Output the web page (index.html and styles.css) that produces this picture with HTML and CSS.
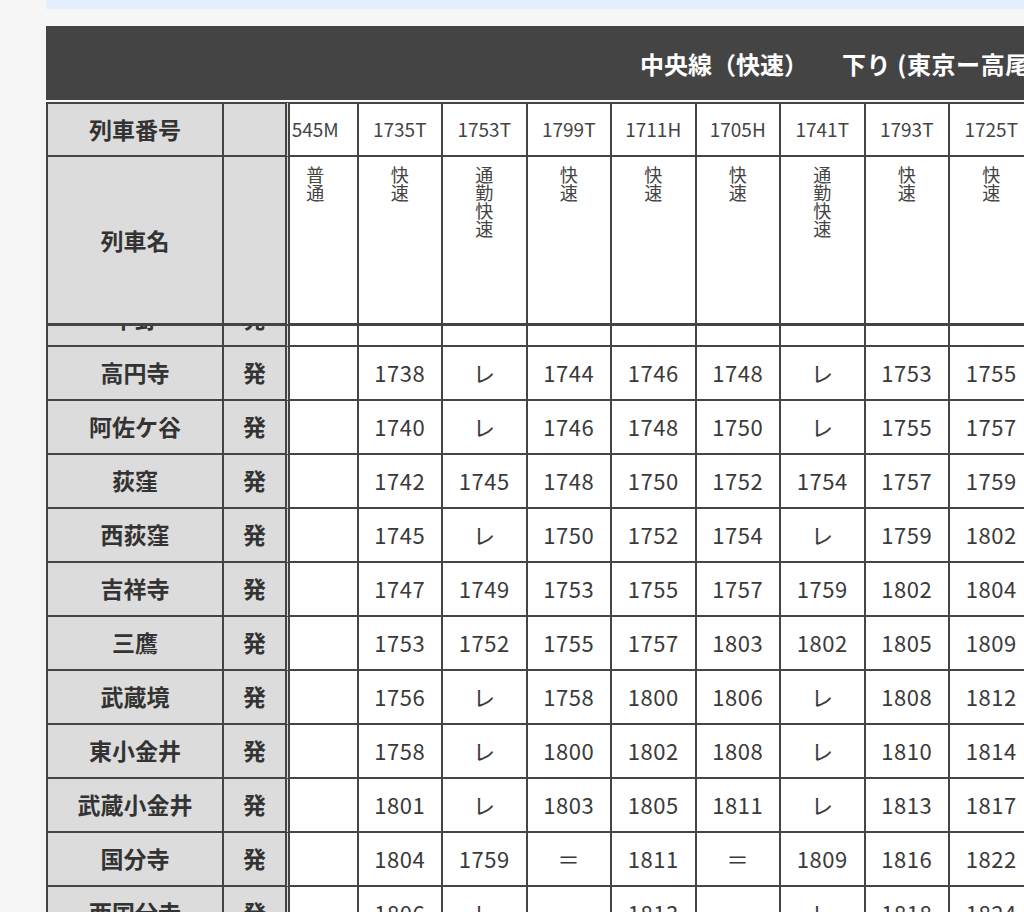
FILE: index.html
```html
<!DOCTYPE html>
<html lang="ja">
<head>
<meta charset="utf-8">
<title>中央線（快速） 下り 時刻表</title>
<link rel="stylesheet" href="styles.css">
</head>
<body>
<div class="page">
  <div class="notice"></div>
  <h1 class="title">中央線（快速）　<span class="dir">下り (東京ー高尾)</span></h1>
  <div class="scroller">
    <table class="tt">
      <thead>
        <tr class="r-no">
          <th class="st corner">列車番号</th>
          <th class="dep corner"></th>
          <th class="tn">545M</th>
          <th class="tn">1735T</th>
          <th class="tn">1753T</th>
          <th class="tn">1799T</th>
          <th class="tn">1711H</th>
          <th class="tn">1705H</th>
          <th class="tn">1741T</th>
          <th class="tn">1793T</th>
          <th class="tn">1725T</th>
          <th class="tn">1727T</th>
          <th class="tn">1801T</th>
        </tr>
        <tr class="r-name">
          <th class="st corner">列車名</th>
          <th class="dep corner"></th>
          <th class="kind"><span class="vt">普通</span></th>
          <th class="kind"><span class="vt">快速</span></th>
          <th class="kind"><span class="vt">通勤快速</span></th>
          <th class="kind"><span class="vt">快速</span></th>
          <th class="kind"><span class="vt">快速</span></th>
          <th class="kind"><span class="vt">快速</span></th>
          <th class="kind"><span class="vt">通勤快速</span></th>
          <th class="kind"><span class="vt">快速</span></th>
          <th class="kind"><span class="vt">快速</span></th>
          <th class="kind"><span class="vt">快速</span></th>
          <th class="kind"><span class="vt">快速</span></th>
        </tr>
      </thead>
      <tbody>
        <tr><th class="st">中野</th><th class="dep">発</th><td></td><td></td><td></td><td></td><td></td><td></td><td></td><td></td><td></td><td></td><td></td></tr>
        <tr><th class="st">高円寺</th><th class="dep">発</th><td></td><td>1738</td><td>レ</td><td>1744</td><td>1746</td><td>1748</td><td>レ</td><td>1753</td><td>1755</td><td>1757</td><td>1759</td></tr>
        <tr><th class="st">阿佐ケ谷</th><th class="dep">発</th><td></td><td>1740</td><td>レ</td><td>1746</td><td>1748</td><td>1750</td><td>レ</td><td>1755</td><td>1757</td><td>1759</td><td>1801</td></tr>
        <tr><th class="st">荻窪</th><th class="dep">発</th><td></td><td>1742</td><td>1745</td><td>1748</td><td>1750</td><td>1752</td><td>1754</td><td>1757</td><td>1759</td><td>1801</td><td>1803</td></tr>
        <tr><th class="st">西荻窪</th><th class="dep">発</th><td></td><td>1745</td><td>レ</td><td>1750</td><td>1752</td><td>1754</td><td>レ</td><td>1759</td><td>1802</td><td>1804</td><td>1806</td></tr>
        <tr><th class="st">吉祥寺</th><th class="dep">発</th><td></td><td>1747</td><td>1749</td><td>1753</td><td>1755</td><td>1757</td><td>1759</td><td>1802</td><td>1804</td><td>1806</td><td>1808</td></tr>
        <tr><th class="st">三鷹</th><th class="dep">発</th><td></td><td>1753</td><td>1752</td><td>1755</td><td>1757</td><td>1803</td><td>1802</td><td>1805</td><td>1809</td><td>1811</td><td>1813</td></tr>
        <tr><th class="st">武蔵境</th><th class="dep">発</th><td></td><td>1756</td><td>レ</td><td>1758</td><td>1800</td><td>1806</td><td>レ</td><td>1808</td><td>1812</td><td>1814</td><td>1816</td></tr>
        <tr><th class="st">東小金井</th><th class="dep">発</th><td></td><td>1758</td><td>レ</td><td>1800</td><td>1802</td><td>1808</td><td>レ</td><td>1810</td><td>1814</td><td>1816</td><td>1818</td></tr>
        <tr><th class="st">武蔵小金井</th><th class="dep">発</th><td></td><td>1801</td><td>レ</td><td>1803</td><td>1805</td><td>1811</td><td>レ</td><td>1813</td><td>1817</td><td>1819</td><td>1821</td></tr>
        <tr><th class="st">国分寺</th><th class="dep">発</th><td></td><td>1804</td><td>1759</td><td>＝</td><td>1811</td><td>＝</td><td>1809</td><td>1816</td><td>1822</td><td>1824</td><td>1826</td></tr>
        <tr><th class="st">西国分寺</th><th class="dep">発</th><td></td><td>1806</td><td>レ</td><td></td><td>1813</td><td></td><td>レ</td><td>1818</td><td>1824</td><td>1826</td><td>1828</td></tr>
        <tr><th class="st">国立</th><th class="dep">発</th><td></td><td>1809</td><td>レ</td><td></td><td>1816</td><td></td><td>レ</td><td>1821</td><td>1827</td><td>1829</td><td>1831</td></tr>
        <tr><th class="st">立川</th><th class="dep">発</th><td></td><td>1812</td><td>1806</td><td></td><td>1819</td><td></td><td>1815</td><td>1824</td><td>1830</td><td>1832</td><td>1834</td></tr>
      </tbody>
    </table>
  </div>
</div>
<script src="script.js"></script>
</body>
</html>
```

FILE: styles.css
```css
* {
  box-sizing: border-box;
}

html,
body {
  margin: 0;
  height: 100%;
}

body {
  background: #f6f6f6;
  font-family: "Noto Sans CJK JP", "Noto Sans", sans-serif;
  color: #333;
  overflow: hidden;
}

.page {
  padding-left: 46px;
}

.notice {
  height: 9px;
  background: #e1f0fc;
}

.title {
  margin: 17px 0 0;
  height: 74px;
  background: #444;
  color: #fff;
  display: flex;
  align-items: center;
  padding-left: 594px;
  font-size: 24px;
  font-weight: 700;
  white-space: nowrap;
  overflow: hidden;
}

.title .dir {
  margin-left: 22px;
  letter-spacing: 0.6px;
}

.scroller {
  margin-top: 2px;
  height: 810px;
  overflow: auto;
  scrollbar-width: none;
}

.scroller::-webkit-scrollbar {
  display: none;
}

.tt {
  border-collapse: separate;
  border-spacing: 0;
  table-layout: fixed;
  width: 1173.5px;
}

.tt th,
.tt td {
  padding: 0;
  border-right: 2px solid #444;
  border-bottom: 2px solid #444;
  text-align: center;
  vertical-align: middle;
  background: #fff;
  white-space: nowrap;
}

.tt td {
  height: 54px;
  padding-bottom: 3px;
  font-size: 22px;
  letter-spacing: 0.5px;
  font-weight: 400;
  color: #3a3a3a;
}

.tt .st {
  width: 178px;
  border-left: 2px solid #444;
  background: #dcdcdc;
  font-size: 23px;
  font-weight: 700;
  color: #333;
  position: sticky;
  left: 0;
  z-index: 2;
}

.tt .dep {
  width: 66px;
  border-right: 5px double #444;
  background: #dcdcdc;
  font-size: 23px;
  font-weight: 700;
  color: #333;
  position: sticky;
  left: 178px;
  z-index: 2;
}

.tt tbody th {
  padding-bottom: 2px;
}

.tt thead th {
  position: sticky;
  z-index: 3;
}

.tt thead .corner {
  z-index: 4;
}

.r-no th {
  top: 0;
  height: 55px;
  padding-bottom: 2px;
  border-top: 2px solid #444;
}

.r-name th {
  top: 55px;
  height: 169px;
  border-bottom-width: 3px;
}

.tn {
  width: 84.5px;
  font-size: 19px;
  font-weight: 400;
  color: #444;
}

.tt .kind {
  vertical-align: top;
  padding-top: 9px;
  font-size: 18px;
  font-weight: 400;
  color: #444;
}

.vt {
  display: inline-block;
  writing-mode: vertical-rl;
  line-height: 1;
}
```

FILE: script.js
```js
var scroller = document.querySelector('.scroller');
scroller.scrollLeft = 16;
scroller.scrollTop = 33;
```
